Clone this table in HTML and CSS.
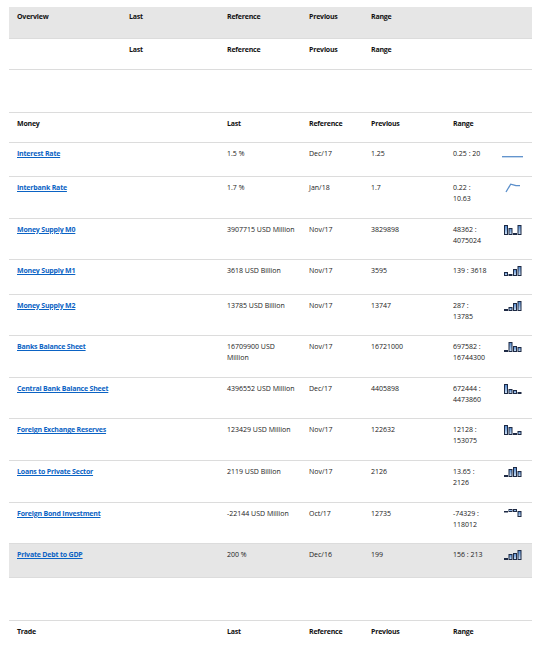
FILE: index.html
```html
<!DOCTYPE html>
<html>
<head>
<meta charset="utf-8">
<link rel="stylesheet" href="styles.css">
</head>
<body>
<div class="page">
  <svg width="0" height="0" class="defs">
    <defs>
      <linearGradient id="bg" x1="0" y1="0" x2="0" y2="1">
        <stop offset="0" stop-color="#4f86cc"/>
        <stop offset="1" stop-color="#d2e4f7"/>
      </linearGradient>
    </defs>
  </svg>

  <table class="tbl overview">
    <colgroup><col class="o1"><col class="o2"><col class="o3"><col class="o4"><col class="o5"><col></colgroup>
    <tr class="head"><th>Overview</th><th>Last</th><th>Reference</th><th>Previous</th><th>Range</th><th></th></tr>
    <tr class="sub"><th></th><th>Last</th><th>Reference</th><th>Previous</th><th>Range</th><th></th></tr>
  </table>

  <table class="tbl data">
    <colgroup><col class="c1"><col class="c2"><col class="c3"><col class="c4"><col class="c5"><col class="c6"></colgroup>
    <tr class="colhead"><th>Money</th><th>Last</th><th>Reference</th><th>Previous</th><th>Range</th><th></th></tr>
    <tr>
      <td><a href="#">Interest Rate</a></td><td>1.5 %</td><td>Dec/17</td><td>1.25</td><td>0.25 : 20</td>
      <td><svg class="spark" width="24" height="14.5"><path d="M0 8.7H21" stroke="#5b8fcb" stroke-width="1.3" fill="none"/></svg></td>
    </tr>
    <tr>
      <td><a href="#">Interbank Rate</a></td><td>1.7 %</td><td>Jan/18</td><td>1.7</td><td>0.22 : 10.63</td>
      <td><svg class="spark" width="24" height="14.5"><path d="M4 10L8.7 2.2L11.3 2.8L14 3.6L18 3.6" stroke="#5b8fcb" stroke-width="1.3" fill="none"/></svg></td>
    </tr>
    <tr>
      <td><a href="#">Money Supply M0</a></td><td>3907715 USD Million</td><td>Nov/17</td><td>3829898</td><td>48362 : 4075024</td>
      <td><svg class="spark" width="24" height="14.5"><g class="bars"><rect x="2.5" y="1.5" width="3" height="9"/><rect x="7" y="4.5" width="3" height="6"/><rect x="11.5" y="9.5" width="3" height="1"/><rect x="16" y="1.5" width="3" height="9"/></g></svg></td>
    </tr>
    <tr>
      <td><a href="#">Money Supply M1</a></td><td>3618 USD Billion</td><td>Nov/17</td><td>3595</td><td>139 : 3618</td>
      <td><svg class="spark" width="24" height="14.5"><g class="bars"><rect x="2.5" y="7.5" width="3" height="3"/><rect x="7" y="9.5" width="3" height="1"/><rect x="11.5" y="4.5" width="3" height="6"/><rect x="16" y="1.5" width="3" height="9"/></g></svg></td>
    </tr>
    <tr>
      <td><a href="#">Money Supply M2</a></td><td>13785 USD Billion</td><td>Nov/17</td><td>13747</td><td>287 : 13785</td>
      <td><svg class="spark" width="24" height="14.5"><g class="bars"><rect x="2.5" y="9.5" width="3" height="1"/><rect x="7" y="7.5" width="3" height="3"/><rect x="11.5" y="3.5" width="3" height="7"/><rect x="16" y="1.5" width="3" height="9"/></g></svg></td>
    </tr>
    <tr>
      <td><a href="#">Banks Balance Sheet</a></td><td>16709900 USD Million</td><td>Nov/17</td><td>16721000</td><td>697582 : 16744300</td>
      <td><svg class="spark" width="24" height="14.5"><g class="bars"><rect x="2.5" y="9.5" width="3" height="1"/><rect x="7" y="1.5" width="3" height="9"/><rect x="11.5" y="5.5" width="3" height="5"/><rect x="16" y="6.5" width="3" height="4"/></g></svg></td>
    </tr>
    <tr>
      <td><a href="#">Central Bank Balance Sheet</a></td><td>4396552 USD Million</td><td>Dec/17</td><td>4405898</td><td>672444 : 4473860</td>
      <td><svg class="spark" width="24" height="14.5"><g class="bars"><rect x="2.5" y="1.5" width="3" height="9"/><rect x="7" y="6.5" width="3" height="4"/><rect x="11.5" y="7.5" width="3" height="3"/><rect x="16" y="9.5" width="3" height="1"/></g></svg></td>
    </tr>
    <tr>
      <td><a href="#">Foreign Exchange Reserves</a></td><td>123429 USD Million</td><td>Nov/17</td><td>122632</td><td>12128 : 153075</td>
      <td><svg class="spark" width="24" height="14.5"><g class="bars"><rect x="2.5" y="1.5" width="3" height="9"/><rect x="7" y="3.5" width="3" height="7"/><rect x="11.5" y="9.5" width="3" height="1"/><rect x="16" y="7.5" width="3" height="3"/></g></svg></td>
    </tr>
    <tr>
      <td><a href="#">Loans to Private Sector</a></td><td>2119 USD Billion</td><td>Nov/17</td><td>2126</td><td>13.65 : 2126</td>
      <td><svg class="spark" width="24" height="14.5"><g class="bars"><rect x="2.5" y="9.5" width="3" height="1"/><rect x="7" y="3.5" width="3" height="7"/><rect x="11.5" y="1.5" width="3" height="9"/><rect x="16" y="5.5" width="3" height="5"/></g></svg></td>
    </tr>
    <tr>
      <td><a href="#">Foreign Bond Investment</a></td><td>-22144 USD Million</td><td>Oct/17</td><td>12735</td><td>-74329 : 118012</td>
      <td><svg class="spark" width="24" height="14.5"><g class="bars"><rect x="2.5" y="3.5" width="3" height="0.5"/><rect x="7" y="1.5" width="3" height="2"/><rect x="11.5" y="1.5" width="3" height="2"/><rect x="16" y="3.5" width="3" height="5"/></g></svg></td>
    </tr>
    <tr class="hl">
      <td><a href="#">Private Debt to GDP</a></td><td>200 %</td><td>Dec/16</td><td>199</td><td>156 : 213</td>
      <td><svg class="spark" width="24" height="14.5"><g class="bars"><rect x="2.5" y="9.5" width="3" height="1"/><rect x="7" y="5.5" width="3" height="5"/><rect x="11.5" y="4.5" width="3" height="6"/><rect x="16" y="1.5" width="3" height="9"/></g></svg></td>
    </tr>
  </table>

  <table class="tbl data">
    <colgroup><col class="c1"><col class="c2"><col class="c3"><col class="c4"><col class="c5"><col class="c6"></colgroup>
    <tr class="colhead"><th>Trade</th><th>Last</th><th>Reference</th><th>Previous</th><th>Range</th><th></th></tr>
  </table>
</div>
</body>
</html>
```
FILE: styles.css
```css
html, body {
  margin: 0;
  padding: 0;
  background: #ffffff;
}
body {
  font-family: "Open Sans", "Liberation Sans", sans-serif;
  font-size: 7px;
  line-height: 11px;
  color: #1a1a1a;
}
.page {
  padding: 7px 11px 0 9px;
}
.defs {
  position: absolute;
}
.tbl {
  width: 523px;
  border-collapse: collapse;
  table-layout: fixed;
  margin-bottom: 42px;
}
.tbl th,
.tbl td {
  text-align: left;
  vertical-align: top;
  padding: 5px 2px 13.6px 8px;
  border-bottom: 1px solid #dcdcdc;
}
.tbl th {
  font-weight: 700;
  letter-spacing: -0.2px;
  color: #111111;
}
.overview .head th {
  background: #e6e6e6;
  padding-top: 4px;
  padding-bottom: 16px;
}
.o1 { width: 112px; }
.o2 { width: 98px; }
.o3 { width: 82px; }
.o4 { width: 62px; }
.o5 { width: 82px; }

.data {
  border-top: 1px solid #dcdcdc;
}
.c1 { width: 210px; }
.c2 { width: 82px; }
.c3 { width: 62px; }
.c4 { width: 82px; }
.c5 { width: 49px; }
.c6 { width: 38px; }

.data td:nth-child(2) {
  padding-right: 4px;
}
.data td:nth-child(5) {
  padding-right: 6px;
}

.data a {
  color: #0b63c4;
  font-weight: 700;
  letter-spacing: -0.2px;
  text-decoration: underline;
}
.data tr.hl td {
  background: #e6e6e6;
}
.spark {
  display: block;
}
.bars rect {
  fill: url(#bg);
  stroke: #1e2a44;
  stroke-width: 1;
}
```
